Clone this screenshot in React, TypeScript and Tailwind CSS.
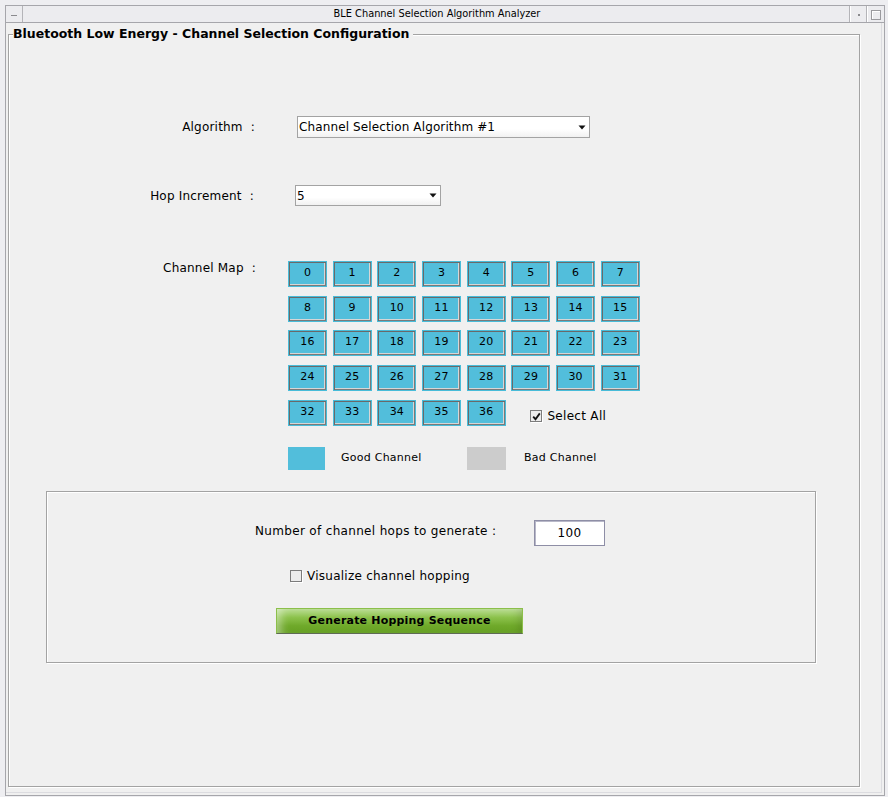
import React from "react";

const FONT = "font-['DejaVu_Sans','Liberation_Sans',sans-serif]";

function Combo({ width, text }: { width: string; text: string }) {
  return (
    <div
      className={`${width} h-full flex items-center justify-between border border-[#a3a3a3] bg-[linear-gradient(180deg,#ffffff_0%,#ffffff_60%,#f1f1f1_100%)] pl-[1px] pr-[3px]`}
    >
      <span className="text-[12px] leading-[14px] tracking-[0.12px] text-black whitespace-pre">{text}</span>
      <svg width="8" height="5" viewBox="0 0 8 5">
        <path d="M0.5 0.5 L7.5 0.5 L4 4.5 Z" fill="#111" />
      </svg>
    </div>
  );
}

function ChannelButton({ n }: { n: number }) {
  return (
    <div className="w-[39px] h-[26px] border border-[#48bcd9] bg-[#52bedb] shadow-[inset_1px_1px_0_#6a6a6a,inset_-1px_-1px_0_#7a7a7a,inset_-2px_-2px_0_#d6d6d6] flex items-center justify-center pb-[2px]">
      <span className="text-[11px] leading-[12px] tracking-[0.2px] text-black">{n}</span>
    </div>
  );
}

function CheckBox({ checked }: { checked: boolean }) {
  return (
    <div className="w-[12px] h-[12px] border border-[#7c7c7c] bg-[#ececec] shadow-[1px_1px_0_#ffffff] flex items-center justify-center">
      {checked && (
        <svg width="9" height="9" viewBox="0 0 9 9">
          <path d="M1.2 4.6 L3.5 7.2 L7.8 1.4" stroke="#111" strokeWidth="1.8" fill="none" />
        </svg>
      )}
    </div>
  );
}

export default function App() {
  const rows = [
    [0, 1, 2, 3, 4, 5, 6, 7],
    [8, 9, 10, 11, 12, 13, 14, 15],
    [16, 17, 18, 19, 20, 21, 22, 23],
    [24, 25, 26, 27, 28, 29, 30, 31],
  ];
  return (
    <div className={`w-[888px] h-[797px] bg-[#eeeef1] pt-[5px] pl-[5px] ${FONT} text-black`}>
      <div className="w-[880px] h-[791px] border border-[#a6a6ab] flex flex-col bg-[#f0f0f0]">
        {/* title bar */}
        <div className="h-[17px] shrink-0 flex border-b border-[#a6a6ab] bg-[#ececef]">
          <div className="w-[17px] border-r border-[#b4b4b8] flex items-center justify-center">
            <div className="w-[6px] h-[1px] bg-[#8a8a8e] mt-[2px]" />
          </div>
          <div className="flex-1 text-center text-[9.8px] leading-[16px] pl-[2px]">
            BLE Channel Selection Algorithm Analyzer
          </div>
          <div className="w-[17px] border-l border-[#b4b4b8] shadow-[inset_1px_0_0_#ffffff] flex items-center justify-center">
            <div className="w-[2px] h-[2px] bg-[#8a8a8e] mt-[2px] ml-[1px]" />
          </div>
          <div className="w-[18px] border-l border-[#b4b4b8] shadow-[inset_1px_0_0_#ffffff] flex items-center justify-center">
            <div className="w-[10px] h-[10px] border border-[#9a9a9e] shadow-[inset_1px_1px_0_#ffffff] mt-[1px]" />
          </div>
        </div>

        {/* content */}
        <div className="flex-1 flex flex-col border-r border-b border-[#dcdce0] mr-[2px] mb-[2px]">
          <fieldset className="ml-[2px] mt-[3px] w-[852px] h-[761px] border border-[#a3a3a3] shadow-[inset_1px_1px_0_#ffffff,1px_1px_0_#ffffff]">
            <legend className="ml-[4px] pr-[4px] bg-[#f0f0f0] text-[12.5px] leading-[16px] font-bold">
              Bluetooth Low Energy - Channel Selection Configuration
            </legend>

            <div className="flex flex-col">
              {/* Algorithm */}
              <div className="flex items-center mt-[74px] h-[22px]">
                <div className="w-[246px] text-right text-[12px] leading-[14px] tracking-[0.2px] whitespace-pre">Algorithm  :</div>
                <div className="ml-[42px] h-full">
                  <Combo width="w-[293px]" text="Channel Selection Algorithm #1" />
                </div>
              </div>

              {/* Hop Increment */}
              <div className="flex items-center mt-[47px] h-[21px]">
                <div className="w-[245px] text-right text-[12px] leading-[14px] tracking-[0.2px] whitespace-pre">Hop Increment  :</div>
                <div className="ml-[41px] h-full">
                  <Combo width="w-[146px]" text="5" />
                </div>
              </div>

              {/* Channel Map */}
              <div className="flex items-start mt-[55px]">
                <div className="w-[247px] text-right text-[12px] leading-[14px] tracking-[0.2px] whitespace-pre">Channel Map  :</div>
                <div className="ml-[32px] grid grid-cols-[repeat(8,39px)] gap-x-[5.7px] gap-y-[8.7px]">
                  {rows.flat().map((n) => (
                    <ChannelButton key={n} n={n} />
                  ))}
                  {[32, 33, 34, 35, 36].map((n) => (
                    <ChannelButton key={n} n={n} />
                  ))}
                  <div className="col-span-3 flex items-center pl-[19px] pt-[7px]">
                    <CheckBox checked />
                    <span className="ml-[5px] text-[12px] leading-[14px] tracking-[0.3px]">Select All</span>
                  </div>
                </div>
              </div>

              {/* Legend */}
              <div className="flex items-center mt-[21px] ml-[279px]">
                <div className="w-[179px] flex items-center">
                  <div className="w-[37px] h-[23px] bg-[#52bedb]" />
                  <span className="ml-[16px] mb-[2px] text-[11px] leading-[13px] tracking-[0.25px]">Good Channel</span>
                </div>
                <div className="flex items-center">
                  <div className="w-[39px] h-[23px] bg-[#cccccc]" />
                  <span className="ml-[18px] mb-[2px] text-[11px] leading-[13px] tracking-[0.25px]">Bad Channel</span>
                </div>
              </div>

              {/* Bottom panel */}
              <div className="mt-[21px] ml-[37px] w-[770px] h-[172px] border border-[#a3a3a3] shadow-[inset_1px_1px_0_#ffffff,1px_1px_0_#ffffff] flex flex-col">
                <div className="flex items-start pt-[28px] pl-[208px]">
                  <span className="w-[279px] mt-[4px] text-[12px] leading-[14px] tracking-[0.33px]">Number of channel hops to generate :</span>
                  <div className="w-[71px] h-[26px] border border-[#8e8ea6] shadow-[inset_1px_1px_0_#b8b8c8] bg-white flex items-center justify-center">
                    <span className="text-[12px] leading-[14px] tracking-[0.3px]">100</span>
                  </div>
                </div>
                <div className="flex items-center mt-[23px] pl-[243px]">
                  <CheckBox checked={false} />
                  <span className="ml-[5px] text-[12px] leading-[14px] tracking-[0.25px]">Visualize channel hopping</span>
                </div>
                <div className="mt-[25px] pl-[229px]">
                  <div className="w-[247px] h-[26px] border border-[#8cbf4a] border-b-[#5f6a55] bg-[linear-gradient(180deg,#bcdf95_0%,#8cc24c_35%,#6fa92a_70%,#66a023_100%)] shadow-[inset_10px_0_10px_-6px_rgba(255,255,255,0.45),inset_-8px_0_8px_-5px_rgba(0,0,0,0.12)] flex items-center justify-center">
                    <span className="text-[11px] leading-[13px] font-bold tracking-[0.2px]">Generate Hopping Sequence</span>
                  </div>
                </div>
              </div>
            </div>
          </fieldset>
        </div>
      </div>
    </div>
  );
}
